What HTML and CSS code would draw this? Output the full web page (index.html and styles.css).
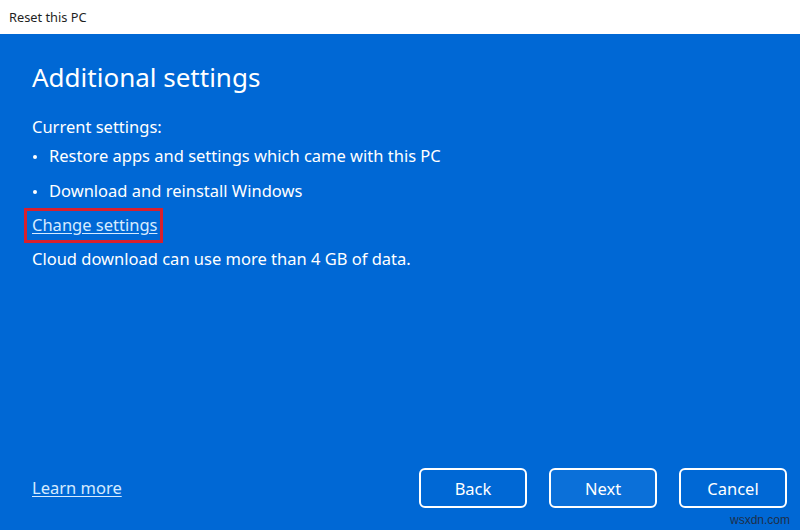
FILE: index.html
```html
<!DOCTYPE html>
<html>
<head>
<meta charset="utf-8">
<link rel="stylesheet" href="styles.css">
</head>
<body>
<div class="window">
  <div class="titlebar">Reset this PC</div>
  <div class="content">
    <h1 class="heading">Additional settings</h1>
    <div class="label">Current settings:</div>
    <ul class="list">
      <li>Restore apps and settings which came with this PC</li>
      <li>Download and reinstall Windows</li>
    </ul>
    <div class="change-row"><span class="highlight"><a class="link">Change settings</a></span></div>
    <div class="note">Cloud download can use more than 4 GB of data.</div>
    <div class="footer">
      <a class="link learn">Learn more</a>
      <div class="buttons">
        <button class="btn">Back</button>
        <button class="btn primary">Next</button>
        <button class="btn">Cancel</button>
      </div>
    </div>
  </div>
  <div class="watermark">wsxdn.com</div>
</div>
</body>
</html>
```
FILE: styles.css
```css
html, body {
  margin: 0;
  padding: 0;
}
body {
  width: 800px;
  height: 530px;
  overflow: hidden;
  font-family: "Noto Sans", "Open Sans", sans-serif;
}
.window {
  position: relative;
  width: 800px;
  height: 530px;
  display: flex;
  flex-direction: column;
}
.titlebar {
  height: 34px;
  background: #ffffff;
  color: #1f1f1f;
  font-size: 12.8px;
  line-height: 34px;
  padding-left: 9px;
  box-sizing: border-box;
}
.content {
  flex: 1;
  background: #0068d5;
  color: #ffffff;
  display: flex;
  flex-direction: column;
  padding: 0 13px 22px 32px;
}
.heading {
  margin: 24px 0 0 0;
  font-weight: 400;
  font-size: 26px;
  line-height: 38px;
}
.label {
  margin-top: 20px;
  font-size: 16.5px;
  line-height: 22px;
}
.list {
  list-style: none;
  margin: 0;
  padding: 0;
}
.list li {
  position: relative;
  padding-left: 17px;
  font-size: 16.5px;
  line-height: 22px;
  margin-top: 13px;
}
.list li:first-child {
  margin-top: 7px;
}
.list li::before {
  content: "";
  position: absolute;
  left: 1px;
  top: 10px;
  width: 4px;
  height: 4px;
  border-radius: 50%;
  background: #ffffff;
}
.change-row {
  margin-top: 6px;
  margin-left: -8px;
}
.highlight {
  display: inline-block;
  border: 3px solid #d9202e;
  padding: 2px 3px 3px 5px;
}
.link {
  color: #d6ebff;
  text-decoration: underline;
  text-underline-offset: 2px;
  font-size: 16.5px;
  line-height: 24px;
}
.note {
  margin-top: 4px;
  font-size: 16.5px;
  line-height: 24px;
}
.footer {
  margin-top: auto;
  display: flex;
  align-items: center;
  justify-content: space-between;
}
.buttons {
  display: flex;
  gap: 22px;
}
.btn {
  width: 108px;
  height: 40px;
  border: 2px solid #ffffff;
  border-radius: 6px;
  background: transparent;
  color: #ffffff;
  font-family: "Noto Sans", "Open Sans", sans-serif;
  font-size: 16.5px;
  padding: 0;
}
.btn.primary {
  background: #0b70d9;
}
.watermark {
  position: absolute;
  right: 10px;
  bottom: 3px;
  font-family: "Liberation Sans", Arial, sans-serif;
  font-size: 12px;
  color: #1e2f4a;
}
```
